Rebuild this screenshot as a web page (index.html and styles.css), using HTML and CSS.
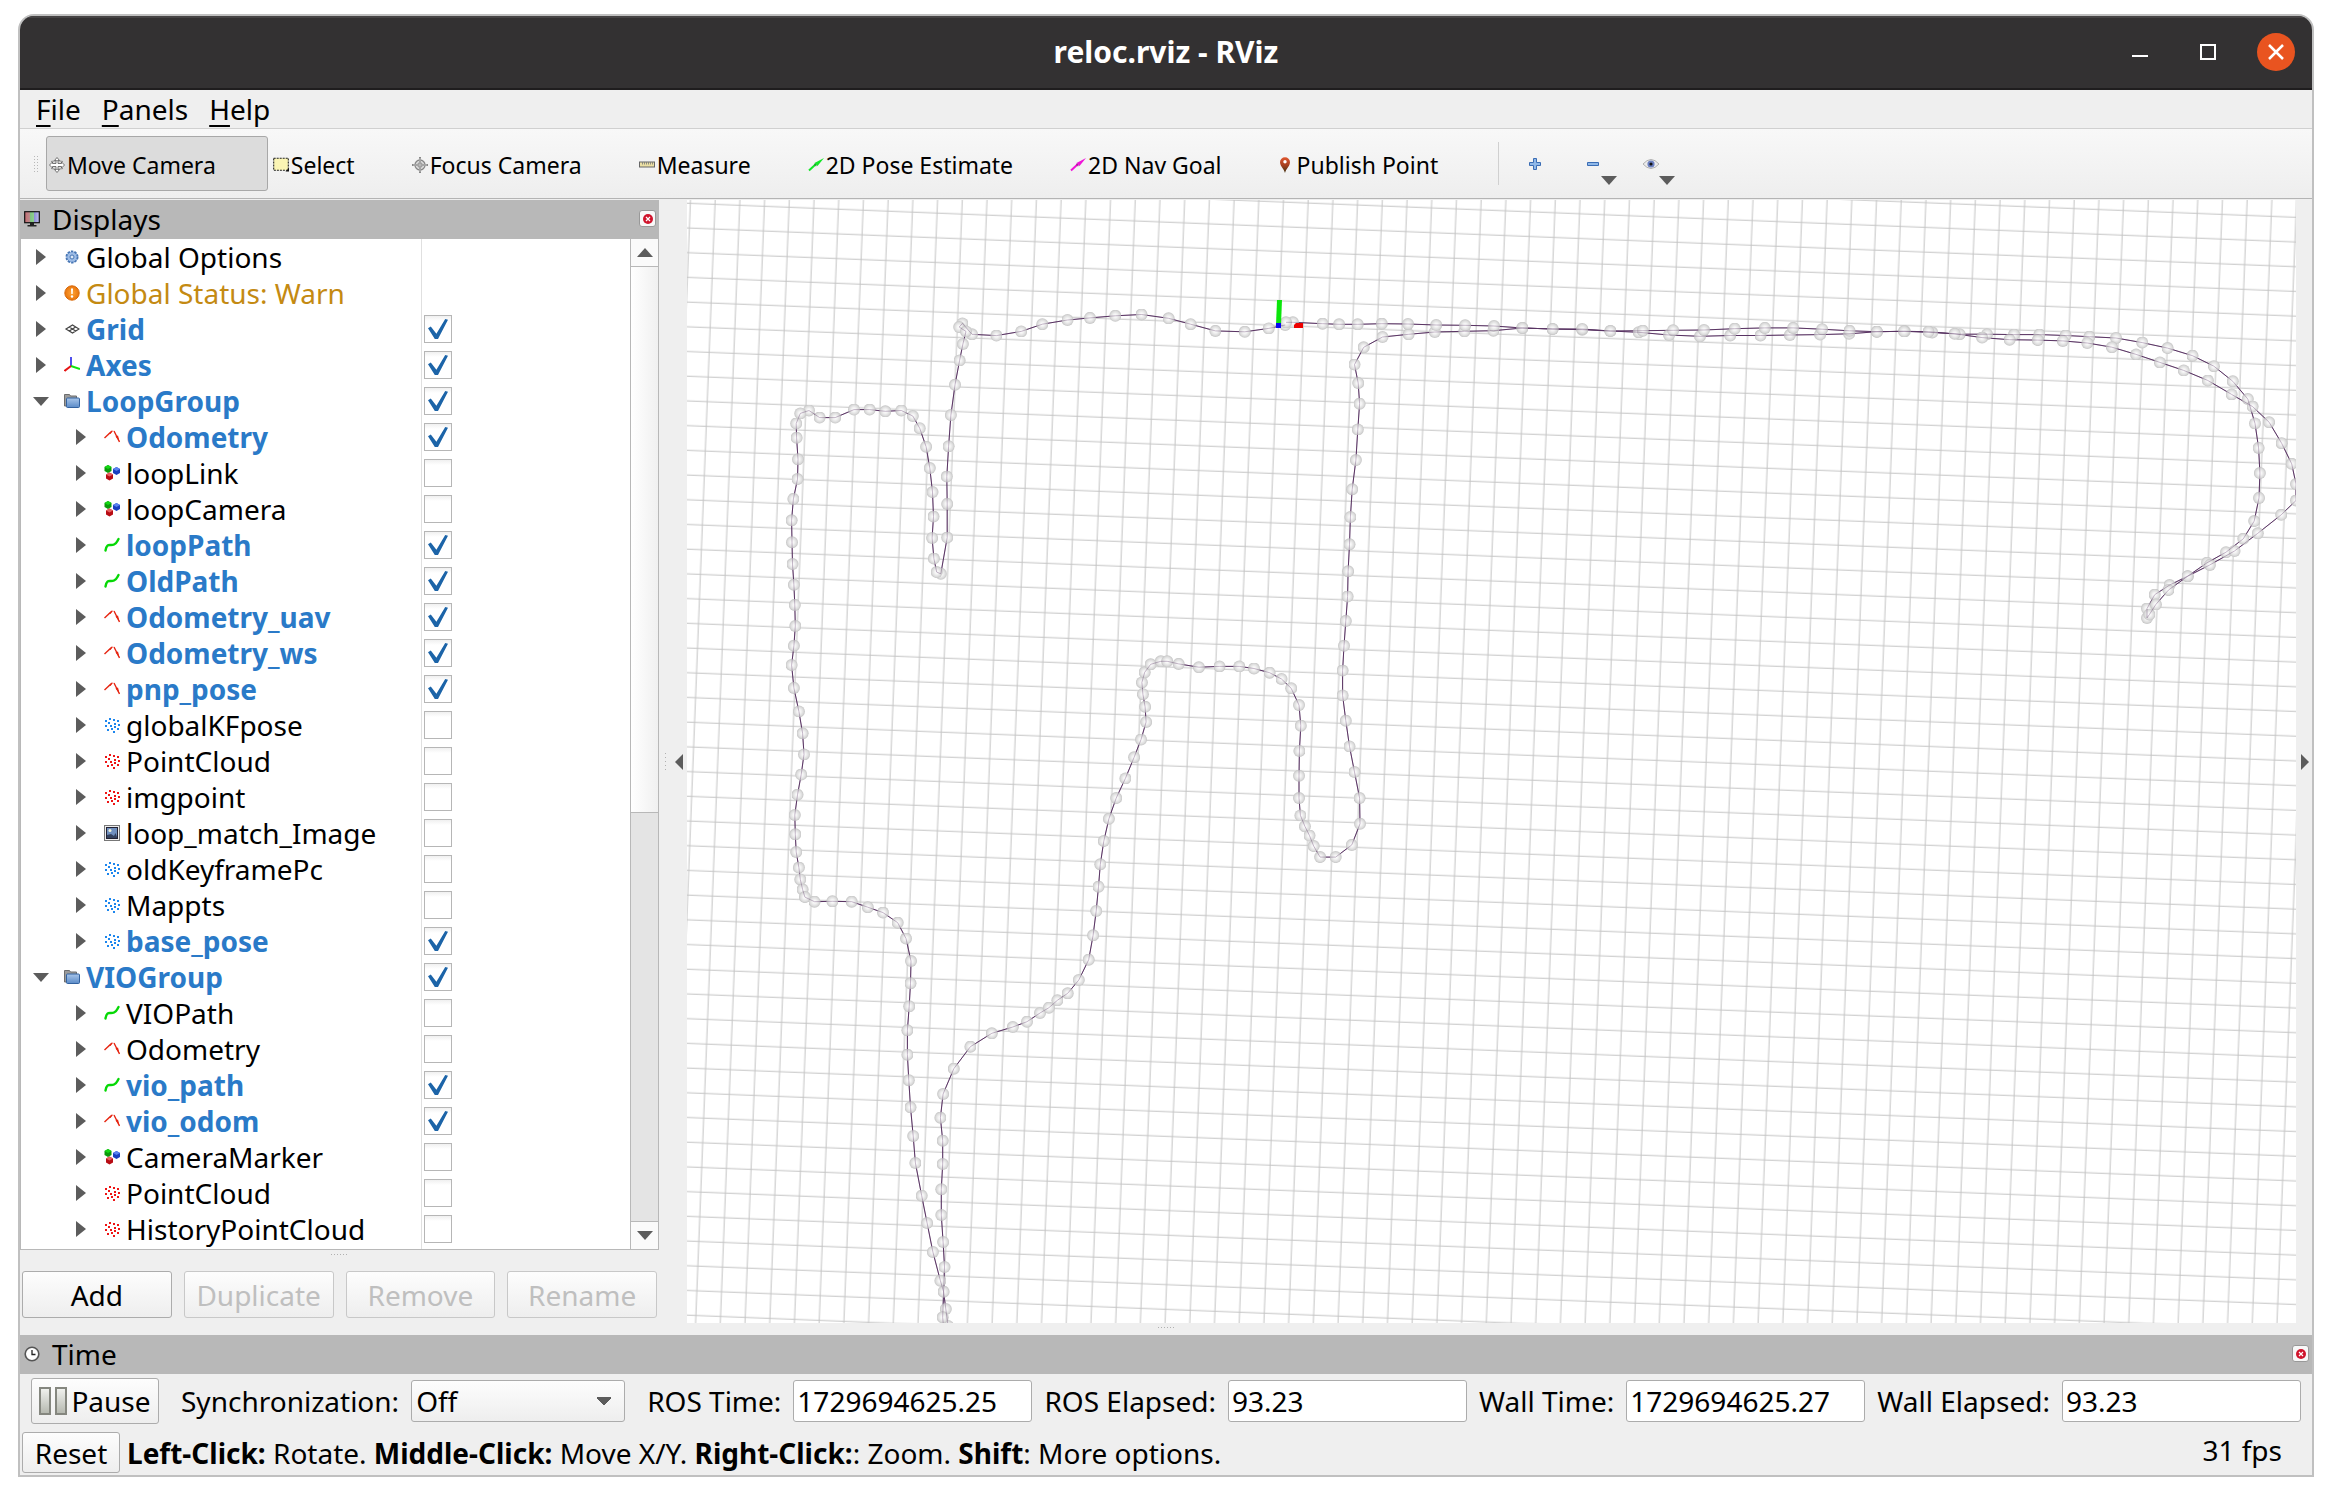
FILE: index.html
```html
<!DOCTYPE html>
<html lang="en">
<head>
<meta charset="utf-8">
<title>reloc.rviz - RViz</title>
<link rel="stylesheet" href="styles.css">
</head>
<body>
<svg class="defs" aria-hidden="true">
  <defs>
    <linearGradient id="gScreen" x1="0" x2="1" y1="0" y2="0"><stop offset="0" stop-color="#c86a72"/><stop offset=".33" stop-color="#b98a8a"/><stop offset=".34" stop-color="#7ec07e"/><stop offset=".66" stop-color="#8fd08f"/><stop offset=".67" stop-color="#8f8fd8"/><stop offset="1" stop-color="#c0c0ee"/></linearGradient>
    <linearGradient id="gFolder" x1="0" x2="0" y1="0" y2="1"><stop offset="0" stop-color="#a9c6ea"/><stop offset="1" stop-color="#5b8bc8"/></linearGradient>
    <linearGradient id="gPin" x1="0" x2="0" y1="0" y2="1"><stop offset="0" stop-color="#e0562e"/><stop offset=".5" stop-color="#a8401f"/><stop offset="1" stop-color="#3c3010"/></linearGradient>
    <linearGradient id="gPause" x1="0" x2="0" y1="0" y2="1"><stop offset="0" stop-color="#f2f3f0"/><stop offset="1" stop-color="#b4b7ae"/></linearGradient>
    <radialGradient id="gWarn"><stop offset="0" stop-color="#ffa53a"/><stop offset="1" stop-color="#e8750c"/></radialGradient>
    <radialGradient id="gBall"><stop offset="0" stop-color="#fff"/><stop offset=".35" stop-color="#f3f3f3"/><stop offset=".75" stop-color="#dcdcdc"/><stop offset="1" stop-color="#c4c4c4"/></radialGradient>
  </defs>
  <symbol id="closed" viewBox="0 0 16 16"><path d="M3 0l10 8-10 8z" fill="#5c5c5c"/></symbol>
  <symbol id="open" viewBox="0 0 16 16"><path d="M0 4h16l-8 9z" fill="#5c5c5c"/></symbol>
  <symbol id="gear" viewBox="0 0 16 16"><circle cx="8" cy="8" r="5.500" fill="#8fb2e0" stroke="#4876b4" stroke-width="2" stroke-dasharray="2.400 1.055"/><circle cx="8" cy="8" r="4.600" fill="#9dbce6"/><circle cx="8" cy="8" r="2" fill="#dfeaf8" stroke="#4876b4"/></symbol>
  <symbol id="warn" viewBox="0 0 16 16"><circle cx="8" cy="8" r="7.200" fill="url(#gWarn)" stroke="#d8690a"/><path d="M7 3.500h2l-.3 5.500H7.300z" fill="#fff"/><circle cx="8" cy="11.500" r="1.200" fill="#fff"/></symbol>
  <symbol id="grid" viewBox="0 0 16 16"><path d="M2 8l6.500-4L15 8l-6.500 4zM5.200 6l6.500 4M11.700 6l-6.500 4" fill="none" stroke="#444" stroke-width="1.200"/></symbol>
  <symbol id="axes" viewBox="0 0 16 16"><path d="M7 9V0" stroke="#1414e6" stroke-width="1.500"/><path d="M7 9l9 3" stroke="#0ee60e" stroke-width="2"/><path d="M7 9l-6.500 5" stroke="#e61414" stroke-width="2"/></symbol>
  <symbol id="folder" viewBox="0 0 16 16"><path d="M.5 13V1.500h5l1 1.500h6v10z" fill="#9b9b9b" stroke="#6d6d6d"/><rect x="2.500" y="5" width="13" height="9.500" rx="1" fill="url(#gFolder)" stroke="#33629f"/></symbol>
  <symbol id="odom" viewBox="0 0 16 16"><path d="M.5 9L8 2" fill="none" stroke="#e62410" stroke-width="1.400"/><path d="M4.500 4.500L9.500 1 6.500 5z" fill="#e62410"/><path d="M10 2l5.500 11" stroke="#e62410" stroke-width="1.400"/><path d="M11.500 7.500l2.500-1 1.500 6z" fill="#e62410"/></symbol>
  <symbol id="marker" viewBox="0 0 16 16"><path d="M4 0l3.500 2v4L4 8 .5 6V2z" fill="#0a9a0a"/><path d="M4 0l3.500 2L4 4 .5 2z" fill="#14d814"/><path d="M12.500 2L16 4v4l-3.500 2L9 8V4z" fill="#1a3fc0"/><path d="M12.500 2L16 4l-3.500 2L9 4z" fill="#5a82f0"/><path d="M5.500 7.500l3.500 2v4l-3.500 2-3.500-2v-4z" fill="#b80c14"/><path d="M5.500 7.500l3.500 2-3.500 2-3.500-2z" fill="#e86060"/></symbol>
  <symbol id="path" viewBox="0 0 16 16"><path d="M1.500 13.500C3 5 6 9.500 10 7.500 13 6 13 4.500 14.500 2" fill="none" stroke="#06d806" stroke-width="2.400" stroke-linecap="round"/></symbol>
  <symbol id="points" viewBox="0 0 16 16"><path d="M5 1h2v2H5zM9 2h2v2H9zM1 3h2v2H1zM13 3h2v2h-2zM4 5h2v2H4zM10 6h2v2h-2zM14 7h2v2h-2zM1 8h2v2H1zM6 8h2v2H6zM10 9h2v2h-2zM3 12h2v2H3zM7 11h2v2H7zM13 11h2v2h-2zM9 14h2v2H9z" fill="currentColor"/></symbol>
  <symbol id="image" viewBox="0 0 16 16"><rect x=".5" y=".5" width="15" height="15" fill="#eee" stroke="#777"/><rect x="2.500" y="2.500" width="11" height="11" fill="#6f8fbe" stroke="#223"/><path d="M3 13v-3l4-1 3 2 1.500-3L13 12v1z" fill="#33415e"/><circle cx="6" cy="5.500" r="1.500" fill="#f2f2d8"/></symbol>
  <symbol id="monitor" viewBox="0 0 16 16"><rect x=".700" y=".700" width="14.600" height="11" fill="url(#gScreen)" stroke="#111" stroke-width="1.200"/><path d="M6 12h4v2h2.500v1.500h-9V14H6z" fill="#222"/></symbol>
  <symbol id="clock" viewBox="0 0 16 16"><circle cx="8" cy="8" r="6.800" fill="#fff" stroke="#555" stroke-width="1.600"/><path d="M8 4v4.500h3.500" fill="none" stroke="#222" stroke-width="1.300"/></symbol>
  <symbol id="move" viewBox="0 0 16 16"><path d="M8 .5l2.500 3H9v3h3.500V5L15.500 8l-3 3V9.500H9v3h1.500L8 15.500l-2.500-3H7v-3H3.500V11L.5 8l3-3v1.500H7v-3H5.500z" fill="#fff" stroke="#555" stroke-width=".8"/><path d="M2 4.500Q8 2.500 14 4.500M2 11.500Q8 13.500 14 11.500" fill="none" stroke="#777" stroke-width=".8"/></symbol>
  <symbol id="select" viewBox="0 0 16 16"><rect x=".700" y="1.200" width="14.600" height="12" fill="#fbf5b4" stroke="#222" stroke-width="1.100" stroke-dasharray="2 1"/><path d="M16 11v3.500h-3.500z" fill="#111"/></symbol>
  <symbol id="focus" viewBox="0 0 16 16"><circle cx="8" cy="8" r="5" fill="#ddd" stroke="#888" stroke-width="1.300"/><circle cx="8" cy="8" r="2.300" fill="#eee" stroke="#888"/><path d="M8 0v16M0 8h16" stroke="#888" stroke-width="2"/><path d="M8 1v14M1 8h14" stroke="#ddd" stroke-width=".7"/></symbol>
  <symbol id="ruler" viewBox="0 0 16 16"><rect x=".5" y="5" width="15" height="5" fill="#ece0a4" stroke="#666"/><path d="M3.500 5v2.500M5.500 5v2.500M7.500 5v2.500M9.500 5v2.500M11.500 5v2.500M13.500 5v2.500" stroke="#777" stroke-width=".8"/></symbol>
  <symbol id="arrow" viewBox="0 0 16 16"><path d="M1 13.500L8 7" stroke="currentColor" stroke-width="2"/><path d="M6.500 6L16 1 9.500 9z" fill="currentColor"/><path d="M6.500 6l3 3-2 .5-1.500-1.500z" fill="#000" opacity=".25"/></symbol>
  <symbol id="pin" viewBox="0 0 16 16"><path d="M6 16C5 11.500 1 9 1 5.200a5 5 0 0 1 10 0C11 9 7 11.500 6 16z" fill="url(#gPin)"/><circle cx="6" cy="4.800" r="1.700" fill="#fff"/></symbol>
  <symbol id="plus" viewBox="0 0 16 16"><path d="M6.500 2.500h3v4h4v3h-4v4h-3v-4h-4v-3h4z" fill="#8fb8e8" stroke="#3a6cb4"/></symbol>
  <symbol id="minus" viewBox="0 0 16 16"><path d="M2.500 6.500h11v3h-11z" fill="#8fb8e8" stroke="#3a6cb4"/></symbol>
  <symbol id="eye" viewBox="0 0 16 16"><path d="M0 8Q8-1 16 8 8 17 0 8z" fill="#ececec" stroke="#b0b0b0"/><circle cx="8" cy="8" r="3.600" fill="#6b7fc0"/><circle cx="8" cy="8" r="1.600" fill="#111"/></symbol>
  <symbol id="close" viewBox="0 0 12 12"><circle cx="6" cy="6" r="5" fill="#d0142c"/><path d="M4 4l4 4M8 4L4 8" stroke="#fff" stroke-width="1.200"/></symbol>
</svg>

<main class="window">
  <header class="titlebar">
    <h1>reloc.rviz - RViz</h1>
    <div class="controls">
      <button aria-label="Minimize"><svg viewBox="0 0 16 16"><path d="M0 12h16" stroke="#fff" stroke-width="2"/></svg></button>
      <button aria-label="Maximize"><svg viewBox="0 0 16 16"><rect x="1" y="1" width="14" height="14" fill="none" stroke="#fff" stroke-width="2"/></svg></button>
      <button class="quit" aria-label="Close"><svg viewBox="0 0 16 16"><path d="M1 1l14 14M15 1L1 15" stroke="#fff" stroke-width="2.500"/></svg></button>
    </div>
  </header>

  <nav class="menubar">
    <button><u>F</u>ile</button>
    <button><u>P</u>anels</button>
    <button><u>H</u>elp</button>
  </nav>

  <div class="toolbar">
    <span class="grip"></span>
    <button class="tool active"><svg><use href="#move"/></svg>Move Camera</button>
    <button class="tool"><svg><use href="#select"/></svg>Select</button>
    <button class="tool"><svg><use href="#focus"/></svg>Focus Camera</button>
    <button class="tool"><svg><use href="#ruler"/></svg>Measure</button>
    <button class="tool green"><svg><use href="#arrow"/></svg>2D Pose Estimate</button>
    <button class="tool pink"><svg><use href="#arrow"/></svg>2D Nav Goal</button>
    <button class="tool"><svg><use href="#pin"/></svg>Publish Point</button>
    <span class="separator"></span>
    <button class="mini" aria-label="Add tool"><svg><use href="#plus"/></svg></button>
    <button class="mini drop" aria-label="Remove tool"><svg><use href="#minus"/></svg></button>
    <button class="mini drop" aria-label="Visibility"><svg><use href="#eye"/></svg></button>
  </div>

  <div class="workspace">
    <section class="displays">
      <header class="dock"><svg><use href="#monitor"/></svg><h2>Displays</h2><button aria-label="Close Displays"><svg><use href="#close"/></svg></button></header>
      <div class="tree">
        <ul class="rows">
          <li><svg><use href="#closed"/></svg><svg><use href="#gear"/></svg><span>Global Options</span></li>
          <li class="warn"><svg><use href="#closed"/></svg><svg><use href="#warn"/></svg><span>Global Status: Warn</span></li>
          <li class="on"><svg><use href="#closed"/></svg><svg><use href="#grid"/></svg><label for="c1">Grid</label><input type="checkbox" id="c1" checked></li>
          <li class="on"><svg><use href="#closed"/></svg><svg><use href="#axes"/></svg><label for="c2">Axes</label><input type="checkbox" id="c2" checked></li>
          <li class="on"><svg><use href="#open"/></svg><svg><use href="#folder"/></svg><label for="c3">LoopGroup</label><input type="checkbox" id="c3" checked></li>
          <li class="sub on"><svg><use href="#closed"/></svg><svg><use href="#odom"/></svg><label for="c4">Odometry</label><input type="checkbox" id="c4" checked></li>
          <li class="sub"><svg><use href="#closed"/></svg><svg><use href="#marker"/></svg><label for="c5">loopLink</label><input type="checkbox" id="c5"></li>
          <li class="sub"><svg><use href="#closed"/></svg><svg><use href="#marker"/></svg><label for="c6">loopCamera</label><input type="checkbox" id="c6"></li>
          <li class="sub on"><svg><use href="#closed"/></svg><svg><use href="#path"/></svg><label for="c7">loopPath</label><input type="checkbox" id="c7" checked></li>
          <li class="sub on"><svg><use href="#closed"/></svg><svg><use href="#path"/></svg><label for="c8">OldPath</label><input type="checkbox" id="c8" checked></li>
          <li class="sub on"><svg><use href="#closed"/></svg><svg><use href="#odom"/></svg><label for="c9">Odometry_uav</label><input type="checkbox" id="c9" checked></li>
          <li class="sub on"><svg><use href="#closed"/></svg><svg><use href="#odom"/></svg><label for="c10">Odometry_ws</label><input type="checkbox" id="c10" checked></li>
          <li class="sub on"><svg><use href="#closed"/></svg><svg><use href="#odom"/></svg><label for="c11">pnp_pose</label><input type="checkbox" id="c11" checked></li>
          <li class="sub"><svg><use href="#closed"/></svg><svg class="blue"><use href="#points"/></svg><label for="c12">globalKFpose</label><input type="checkbox" id="c12"></li>
          <li class="sub"><svg><use href="#closed"/></svg><svg class="red"><use href="#points"/></svg><label for="c13">PointCloud</label><input type="checkbox" id="c13"></li>
          <li class="sub"><svg><use href="#closed"/></svg><svg class="red"><use href="#points"/></svg><label for="c14">imgpoint</label><input type="checkbox" id="c14"></li>
          <li class="sub"><svg><use href="#closed"/></svg><svg><use href="#image"/></svg><label for="c15">loop_match_Image</label><input type="checkbox" id="c15"></li>
          <li class="sub"><svg><use href="#closed"/></svg><svg class="blue"><use href="#points"/></svg><label for="c16">oldKeyframePc</label><input type="checkbox" id="c16"></li>
          <li class="sub"><svg><use href="#closed"/></svg><svg class="blue"><use href="#points"/></svg><label for="c17">Mappts</label><input type="checkbox" id="c17"></li>
          <li class="sub on"><svg><use href="#closed"/></svg><svg class="blue"><use href="#points"/></svg><label for="c18">base_pose</label><input type="checkbox" id="c18" checked></li>
          <li class="on"><svg><use href="#open"/></svg><svg><use href="#folder"/></svg><label for="c19">VIOGroup</label><input type="checkbox" id="c19" checked></li>
          <li class="sub"><svg><use href="#closed"/></svg><svg><use href="#path"/></svg><label for="c20">VIOPath</label><input type="checkbox" id="c20"></li>
          <li class="sub"><svg><use href="#closed"/></svg><svg><use href="#odom"/></svg><label for="c21">Odometry</label><input type="checkbox" id="c21"></li>
          <li class="sub on"><svg><use href="#closed"/></svg><svg><use href="#path"/></svg><label for="c22">vio_path</label><input type="checkbox" id="c22" checked></li>
          <li class="sub on"><svg><use href="#closed"/></svg><svg><use href="#odom"/></svg><label for="c23">vio_odom</label><input type="checkbox" id="c23" checked></li>
          <li class="sub"><svg><use href="#closed"/></svg><svg><use href="#marker"/></svg><label for="c24">CameraMarker</label><input type="checkbox" id="c24"></li>
          <li class="sub"><svg><use href="#closed"/></svg><svg class="red"><use href="#points"/></svg><label for="c25">PointCloud</label><input type="checkbox" id="c25"></li>
          <li class="sub"><svg><use href="#closed"/></svg><svg class="red"><use href="#points"/></svg><label for="c26">HistoryPointCloud</label><input type="checkbox" id="c26"></li>
        </ul>
        <div class="scrollbar">
          <button class="up" aria-label="Scroll up"></button>
          <span class="thumb"></span>
          <span class="groove"></span>
          <button class="down" aria-label="Scroll down"></button>
        </div>
      </div>
      <div class="hgrip"></div>
      <div class="actions">
        <button>Add</button>
        <button disabled>Duplicate</button>
        <button disabled>Remove</button>
        <button disabled>Rename</button>
      </div>
    </section>

    <div class="splitter"><span class="dots"></span><button class="left" aria-label="Hide left dock"></button></div>

    <section class="view" aria-label="3D view">
      <svg class="scene">
        <defs>
          <pattern id="cells" width="24.690" height="24.690" patternUnits="userSpaceOnUse" patternTransform="translate(1016.800 -6.200) rotate(2.260) translate(-12 -12)">
            <path d="M12 0V24.690M0 12H24.690" stroke="#c4c4c4" stroke-width="1" fill="none"/>
          </pattern>
          <marker id="ball" viewBox="0 0 12 12" refX="6" refY="6" markerWidth="12" markerHeight="12" markerUnits="userSpaceOnUse"><circle cx="6" cy="6" r="6" fill="url(#gBall)"/></marker>
          <polyline id="trackA" points="598.2,125 581.7,128.4 557.8,131.8 528.4,130.9 503.6,124.2 481.6,118.3 454.5,114.5 428.3,115.8 403,117.9 380.5,120 355.3,124.2 334.2,131.4 309.4,135.6 285,134.3 275.4,123.4 272.2,127.1 279,131.4 275.9,144 272.6,160.4 268,184.8 263.9,215.1 261.6,246.3 259.8,276.6 260.2,303.9 260.2,337.6 253.8,373.8 249.7,372.1 246.9,358.6 245.1,338 246.5,316.6 245.5,292.1 242.8,268.1 239.1,246.7 232.7,228.2 225.8,216 214.3,210.5 198.3,211.3 182.6,209.6 167,209.6 148.2,217.6 132.6,217.6 122,210.5 113.3,213.4 109.2,223.5 109.6,237.8 111,259.3 110.5,279.1 106.4,298.9 104.6,320.3 105,342.2 105.5,364.1 106.9,384.7 107.8,404.9 108.3,426 106.9,445.8 104.6,465.1 106.9,487.9 111.9,511.4 115.6,533.3 117,554.4 114.2,574.6 110.5,594.8 107.8,615 108.3,634.3 109.2,652 111.9,667.6 113.3,679.4 115.6,689.5 117.9,697.1 127.5,701.7 145.4,701.3 164.7,701.7 180.8,707.2 196,712.6 210.7,722.7 219,738.5 224,761 223.5,783.3 222.2,806.3 220.4,830.3 220.4,854.7 221.8,880.3 223.5,907.3 226.2,936 228.4,963 234.7,995.7 240.1,1023 245.9,1052 253.4,1080.7 256.6,1091.7 258.8,1109 261,1126"/>
          <polyline id="trackB" points="256.6,1128 255.7,1117.3 257.5,1067 256.1,1042 254.3,1015 254.3,989.3 255.7,964 255.7,940.7 253.4,917.7 256.1,894 266.8,868.7 283.4,846.7 304.8,833.3 325.8,827 340,821.7 353,813 361.9,807.7 370.4,800.3 380.7,793.3 391.8,780 401.7,759.7 406.1,735.3 409.2,711 411.5,686.7 413.3,664.3 416.8,641.1 421.9,618.8 429.2,598.1 438.4,578.4 447.1,557.3 454,539.6 459.1,522 458.1,506.8 455.9,494.2 454.9,482.4 457.7,472.3 463.7,464.3 473.8,461.3 480.2,461.3 491.7,463.9 511.9,467.2 532.5,466.4 552.3,466.4 567,468.5 582.6,472.7 594.5,479 604.2,488.3 612,505.1 613.8,525.7 612.4,551 612,575.8 612,598.1 613.4,615.4 617.9,626.3 622.5,635.6 626.7,646.1 633.1,657.1 648.7,657.1 664.8,644.9 673,623.8 672.6,598.1 667.5,572 662.5,546.4 658.8,520.7 655.6,495.4 655.6,470.6 657,445.8 658.8,420.9 660.6,396.5 661.1,371.3 662.5,344.3 663.4,317 665.2,289.2 668.9,260.1 670.8,229.4 672.6,203.7 671.2,183.1 667.5,164.6 676.7,147.3 695.5,137 721.6,134.3 747.8,132 777.4,131.3 806.4,130.7 835.3,128 865.6,129 895.2,129.7 923.4,131 951.7,132.3 982,135 1013,136.3 1043.2,135.5 1073.5,135.5 1102.9,135 1133.1,134.6 1162.1,133.8 1189.9,131.7 1217.8,131.3 1245.2,132.5 1272.6,134.2 1300,134.2 1327,134.6 1352.4,134.6 1378.6,135.5 1402.4,136.7 1429,138 1455.2,142.6 1480.6,148.1 1505.5,155.7 1526.9,166.2 1545.8,181.3 1560.8,199 1568,223.4 1571.6,247.9 1572.9,273.1 1572,297.9 1567.2,321.1 1556.3,338.8 1539,352.2 1520,362.8 1500.7,376.2 1482.6,385.1 1467.7,394.7 1460,408.6 1460,417.9 1462.4,414.5 1468.9,404.4 1481.4,390.1 1500.7,376.2 1522.9,364.9 1547.5,351 1570.8,333.3 1594.2,314.8 1609,300.5 1609,284 1604.7,263.8 1594.6,243.2 1582.1,222.2 1565.6,206.6 1544.6,194.4 1520.9,180.5 1496.7,170.4 1472.9,162.4 1449.1,154.4 1424.9,147.2 1400.3,143 1375.8,140.9 1350.8,140.1 1322.6,139.7 1295.1,137.6 1267.7,133.8 1241.5,131.7 1217,131.3 1189.9,131.7 1162.5,130.8 1135.1,129.2 1106.1,127.9 1077.9,127.9 1047.7,128.7 1017,130 986.1,130.3 955.8,130.7 923.4,131 895.2,129 865.6,129 835.3,128 807,126 778.1,125.3 749.2,125 721,124 694.8,123.7 670.7,124.3 652.1,124.3 635.6,123.7 605.9,122.3 599,122.3"/>
        </defs>
        <rect width="100%" height="100%" fill="url(#cells)"/>
        <g class="lines"><use href="#trackA"/><use href="#trackB"/></g>
        <g class="balls"><use href="#trackA"/><use href="#trackB"/></g>
        <g class="lines faint"><use href="#trackA"/><use href="#trackB"/></g>
        <path d="M592.500 100L591.500 125" stroke="#0be60b" stroke-width="5"/>
        <rect x="589" y="123" width="5" height="5" fill="#0808f0"/>
        <path d="M607 128v-3l2-2h7v5z" fill="#ee0000"/>
      </svg>
    </section>

    <div class="splitter right"><button class="right-arrow" aria-label="Hide right dock"></button></div>
  </div>

  <div class="hgrip wide"></div>

  <section class="time">
    <header class="dock"><svg><use href="#clock"/></svg><h2>Time</h2><button aria-label="Close Time"><svg><use href="#close"/></svg></button></header>
    <form class="fields">
      <button type="button" class="pause"><svg viewBox="0 0 28 28"><path d="M1 1h10v26H1zM17 1h10v26H17z" fill="url(#gPause)" stroke="#85877f" stroke-width="2"/></svg>Pause</button>
      <label for="sync">Synchronization:</label>
      <select id="sync"><option>Off</option></select>
      <label for="rt">ROS Time:</label><input id="rt" value="1729694625.25">
      <label for="re">ROS Elapsed:</label><input id="re" value="93.23">
      <label for="wt">Wall Time:</label><input id="wt" value="1729694625.27">
      <label for="we">Wall Elapsed:</label><input id="we" value="93.23">
    </form>
  </section>

  <footer class="status">
    <button>Reset</button>
    <p><b>Left-Click:</b> Rotate. <b>Middle-Click:</b> Move X/Y. <b>Right-Click:</b>: Zoom. <b>Shift</b>: More options.</p>
    <output>31 fps</output>
  </footer>
</main>
</body>
</html>
```

FILE: styles.css
```css
* { box-sizing: border-box; }
body { margin: 0; padding: 14px 18px 18px; background: #fff; color: #000; font: 28px/36px "Noto Sans", "Open Sans", sans-serif; }
button, input, select { font: inherit; color: inherit; margin: 0; padding: 0; }
button { background: none; border: 0; white-space: nowrap; }
h1, h2, p, ul { margin: 0; padding: 0; font: inherit; }
svg { display: block; flex: none; }
.defs { position: absolute; width: 0; height: 0; }

.window { border: 2px solid #c0c0c0; border-radius: 16px 16px 0 0; background: #efefef; overflow: hidden; }

.titlebar { display: grid; grid-template-columns: 1fr auto 1fr; align-items: center; height: 74px; padding-bottom: 2px; background: #333132; border-top: 2px solid #454344; border-bottom: 2px solid #1f1d1e; color: #fff; }
.titlebar h1 { grid-column: 2; font-size: 30px; font-weight: bold; }
.controls { display: flex; justify-content: flex-end; align-items: center; padding-right: 17px; gap: 30px; }
.controls button { display: grid; place-items: center; width: 38px; height: 38px; }
.controls svg { width: 16px; height: 16px; }
.controls .quit { border-radius: 50%; background: #e95420; }

.menubar { display: flex; gap: 21px; height: 39px; padding-left: 16px; border-bottom: 1px solid #d0d0d0; }
.menubar button { line-height: 36px; }
.menubar u { text-underline-offset: 5px; text-decoration-thickness: 2px; text-decoration-skip-ink: none; }

.toolbar { display: flex; align-items: center; gap: 2px; height: 70px; padding-left: 13px; border-bottom: 1px solid #b4b4b4; background: linear-gradient(#f8f8f8, #eee); font-size: 23px; }
.grip { width: 5px; height: 17px; margin-right: 6px; background: radial-gradient(circle, #b8b8b8 1px, transparent 1px) 0 0 / 3px 3px; }
.tool { display: flex; align-items: center; gap: 2px; height: 55px; padding: 2px 51px 0 2px; border: 1px solid transparent; border-radius: 3px; }
.tool.active { background: #dcdcdc; border-color: #a8a8a8; }
.tool svg, .mini svg { width: 16px; height: 16px; }
.green svg { color: #14e628; }
.pink svg { color: #f014d8; }
.separator { width: 1px; height: 43px; margin: 0 6px; background: #d0d0d0; }
.mini { display: grid; place-items: center; width: 56px; height: 55px; position: relative; }
.drop::after { content: ""; position: absolute; right: 4px; bottom: 6px; border: 8px solid transparent; border-top: 9px solid #5c5c5c; border-bottom: 0; }

.workspace { display: flex; padding-top: 1px; }
.displays { flex: none; width: 639px; }
.dock { display: flex; align-items: center; height: 39px; padding: 0 3px 2px 4px; background: #b8b8b8; }
.dock > svg { width: 16px; height: 16px; margin-right: 12px; }
.dock h2 { flex: 1; }
.dock button { display: grid; place-items: center; width: 17px; height: 17px; border: 1px solid #999; border-radius: 3px; background: #f8f8f8; }
.dock button svg { width: 12px; height: 12px; }
.tree { display: flex; background: #fff; border: 1px solid #b8b8b8; border-top: 0; }
.rows { flex: 1; list-style: none; padding-bottom: 2px; background: linear-gradient(#e0e0e0, #e0e0e0) 400px 0 / 1px 100% no-repeat; }
.rows li { display: flex; align-items: center; height: 36px; padding-left: 12px; }
.rows li.sub { padding-left: 52px; }
.rows svg { width: 16px; height: 16px; }
.rows svg + svg { margin: 0 6px 0 15px; }
.rows label, .rows span { flex: 1; }
.warn { color: #c48a12; }
.on { color: #2a7ac8; font-weight: bold; }
.rows .blue { color: #1c86ee; }
.rows .red { color: #ee1414; }
.rows input { appearance: none; width: 28px; height: 28px; margin-right: 178px; border: 1px solid #b6b6b6; background: linear-gradient(#f0f0f0, #fff 5px); display: grid; place-items: center; }
.rows input:checked::after { content: ""; width: 20px; height: 20px; background: #1c64a8; clip-path: polygon(0 46%, 14% 38%, 42% 74%, 86% 0, 100% 4%, 50% 100%, 34% 100%); }
.scrollbar { display: flex; flex-direction: column; width: 28px; border-left: 1px solid #b8b8b8; }
.scrollbar button { display: grid; place-items: center; height: 28px; background: #fafafa; }
.scrollbar .up { border-bottom: 1px solid #b8b8b8; }
.scrollbar .down { border-top: 1px solid #b8b8b8; }
.up::before { content: ""; border: 8px solid transparent; border-bottom: 9px solid #5c5c5c; border-top: 0; }
.down::before { content: ""; border: 8px solid transparent; border-top: 9px solid #5c5c5c; border-bottom: 0; }
.thumb { flex: 4; background: linear-gradient(90deg, #fff, #f0f0f0); border-bottom: 1px solid #b8b8b8; }
.groove { flex: 3; background: #e4e4e4; }
.hgrip { height: 9px; }
.hgrip::after { content: ""; display: block; width: 17px; height: 9px; margin: auto; background: repeating-linear-gradient(90deg, #b0b0b0 0 1px, transparent 1px 3px) 0 4px / 100% 1px no-repeat; }
.actions { display: grid; grid-template-columns: repeat(4, 1fr); gap: 12px; padding: 12px 2px 5px; }
.actions button, .pause, .status button, select { border: 1px solid #acacac; border-radius: 3px; background: linear-gradient(#fdfdfd, #eee); }
.actions button { height: 47px; }
.actions button:disabled { color: #bfbfbf; border-color: #c8c8c8; }

.splitter { display: flex; align-items: center; width: 28px; padding-left: 6px; gap: 9px; }
.dots { width: 1px; height: 17px; background: repeating-linear-gradient(#b0b0b0 0 1px, transparent 1px 4px); }
.left { border: 8px solid transparent; border-right: 8px solid #5c5c5c; border-left: 0; }
.splitter.right { width: 16px; padding-left: 5px; }
.right-arrow { border: 8px solid transparent; border-left: 8px solid #5c5c5c; border-right: 0; }

.view { flex: 1; min-width: 0; background: #fff; display: flex; contain: size; }
.scene { width: 100%; height: 100%; }
.balls { fill: none; stroke: none; marker: url(#ball); }
.lines { fill: none; stroke: #5a3563; stroke-width: 1; }
.faint { stroke-opacity: .35; }
.hgrip.wide { height: 12px; }

.fields { display: flex; align-items: center; height: 56px; padding: 0 11px 2px; }
.pause { display: flex; align-items: center; justify-content: center; gap: 4px; width: 128px; height: 46px; margin-right: 22px; }
.pause svg { width: 28px; height: 28px; }
.fields label { margin-right: 12px; white-space: nowrap; }
.fields input { flex: 1; min-width: 0; height: 42px; padding: 0 3px; border: 1px solid #acacac; border-radius: 3px; background: #fff; margin-right: 12px; }
.fields input:last-child { margin-right: 0; }
select { appearance: none; width: 214px; height: 42px; padding-left: 4px; margin-right: 22px; }
.fields select { background: conic-gradient(from -41deg at 50% 100%, #5c5c5c 0 82deg, transparent 0) 184px 16px / 16px 9px no-repeat, linear-gradient(#fdfdfd, #eee); }

.status { display: flex; align-items: center; height: 45px; padding: 0 30px 0 2px; }
.status button { width: 98px; height: 41px; margin-right: 7px; }
.status p { flex: 1; white-space: nowrap; }
.status output { padding-bottom: 6px; }
```
